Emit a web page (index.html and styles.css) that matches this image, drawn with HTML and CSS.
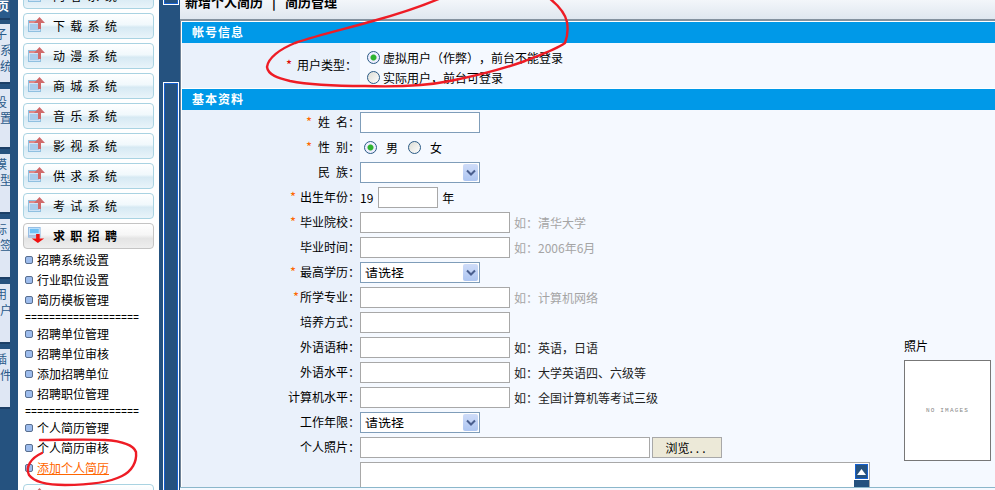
FILE: index.html
```html
<!DOCTYPE html>
<html lang="zh-CN">
<head>
  <meta charset="UTF-8">
  <title>新增个人简历</title>
  <link rel="stylesheet" href="styles.css">
</head>
<body>
  <svg class="icon-defs" width="0" height="0">
    <symbol id="icon-up" viewBox="0 0 18 16">
      <rect x="0.5" y="3.5" width="12" height="11" fill="#cfe3f5" stroke="#8fc0e0"/>
      <rect x="1" y="4" width="11" height="2" fill="#e08a8a"/>
      <rect x="2" y="7" width="9" height="6" fill="#a9cbea"/>
      <path d="M6 6 L11.5 0 L17 6 H13 V12 H10 V6 Z" fill="#d06a6a"/>
    </symbol>
    <symbol id="icon-down" viewBox="0 0 20 18">
      <rect x="0.5" y="0.5" width="13" height="11" fill="#cfe8fb" stroke="#8fb8e0"/>
      <rect x="2" y="2" width="10" height="5" fill="#6fc0f5"/>
      <rect x="1" y="9" width="12" height="2" fill="#b0b8d8"/>
      <path d="M9 8 H13 V13 H18 L11 18 L4 13 H9 Z" fill="#f01010"/>
    </symbol>
  </svg>

  <div class="app">
    <!-- far left tabs -->
    <div class="rail">
      <div class="rail-top">页</div>
      <div class="rail-tab">子<br>系<br>统</div>
      <div class="rail-tab rail-tab-low">设<br>置</div>
      <div class="rail-tab">模<br>型</div>
      <div class="rail-tab">标<br>签</div>
      <div class="rail-tab">用<br>户</div>
      <div class="rail-tab">插<br>件</div>
    </div>

    <!-- menu -->
    <div class="sidebar">
      <a class="menu-btn"><svg class="menu-icon"><use href="#icon-up"/></svg>内容系统</a>
      <a class="menu-btn"><svg class="menu-icon"><use href="#icon-up"/></svg>下载系统</a>
      <a class="menu-btn"><svg class="menu-icon"><use href="#icon-up"/></svg>动漫系统</a>
      <a class="menu-btn"><svg class="menu-icon"><use href="#icon-up"/></svg>商城系统</a>
      <a class="menu-btn"><svg class="menu-icon"><use href="#icon-up"/></svg>音乐系统</a>
      <a class="menu-btn"><svg class="menu-icon"><use href="#icon-up"/></svg>影视系统</a>
      <a class="menu-btn"><svg class="menu-icon"><use href="#icon-up"/></svg>供求系统</a>
      <a class="menu-btn"><svg class="menu-icon"><use href="#icon-up"/></svg>考试系统</a>
      <a class="menu-btn active"><svg class="menu-icon"><use href="#icon-down"/></svg>求职招聘</a>
      <ul class="submenu">
        <li>招聘系统设置</li>
        <li>行业职位设置</li>
        <li>简历模板管理</li>
        <li class="sep">===================</li>
        <li>招聘单位管理</li>
        <li>招聘单位审核</li>
        <li>添加招聘单位</li>
        <li>招聘职位管理</li>
        <li class="sep">===================</li>
        <li>个人简历管理</li>
        <li>个人简历审核</li>
        <li><a class="current" href="#">添加个人简历</a></li>
      </ul>
      <a class="menu-btn"><svg class="menu-icon"><use href="#icon-up"/></svg>系统管理</a>
    </div>

    <!-- scroll strip -->
    <div class="splitter">
      <div class="thumb thumb-top"></div>
      <div class="thumb thumb-main"></div>
    </div>

    <div class="main">
      <div class="page-title"><h1>新增个人简历<span class="title-sep">|</span>简历管理</h1></div>

      <div class="content">
        <div class="section-head">帐号信息</div>
        <div class="row row-account">
          <div class="label"><span class="star star-red">*</span>用户类型：</div>
          <div class="value value-stack">
            <label class="radio-line"><input type="radio" name="usertype" checked>虚拟用户（作弊），前台不能登录</label>
            <label class="radio-line"><input type="radio" name="usertype">实际用户，前台可登录</label>
          </div>
        </div>

        <div class="section-head section-gap">基本资料</div>
        <div class="basic">
          <div class="rows">
            <div class="row">
              <div class="label"><span class="star star-wide">*</span>姓&ensp;名：</div>
              <div class="value"><input class="input input-blue" type="text"></div>
            </div>
            <div class="row">
              <div class="label"><span class="star star-wide">*</span>性&ensp;别：</div>
              <div class="value gender">
                <input type="radio" name="sex" checked><span>男</span>
                <input type="radio" name="sex"><span>女</span>
              </div>
            </div>
            <div class="row">
              <div class="label">民&ensp;族：</div>
              <div class="value"><div class="select"><select></select><span class="select-btn"><svg width="10" height="8" viewBox="0 0 10 8"><path d="M1 1.5 L5 5.5 L9 1.5" fill="none" stroke="#4a5f8f" stroke-width="2"/></svg></span></div></div>
            </div>
            <div class="row">
              <div class="label"><span class="star">*</span>出生年份：</div>
              <div class="value">19<input class="input input-year" type="text">年</div>
            </div>
            <div class="row">
              <div class="label"><span class="star">*</span>毕业院校：</div>
              <div class="value"><input class="input" type="text"><span class="hint">如：清华大学</span></div>
            </div>
            <div class="row">
              <div class="label">毕业时间：</div>
              <div class="value"><input class="input" type="text"><span class="hint">如：2006年6月</span></div>
            </div>
            <div class="row">
              <div class="label"><span class="star">*</span>最高学历：</div>
              <div class="value"><div class="select"><select><option>请选择</option></select><span class="select-btn"><svg width="10" height="8" viewBox="0 0 10 8"><path d="M1 1.5 L5 5.5 L9 1.5" fill="none" stroke="#4a5f8f" stroke-width="2"/></svg></span></div></div>
            </div>
            <div class="row">
              <div class="label"><span class="star star-tight">*</span>所学专业：</div>
              <div class="value"><input class="input" type="text"><span class="hint">如：计算机网络</span></div>
            </div>
            <div class="row">
              <div class="label">培养方式：</div>
              <div class="value"><input class="input" type="text"></div>
            </div>
            <div class="row">
              <div class="label">外语语种：</div>
              <div class="value"><input class="input" type="text"><span class="hint hint-dark">如：英语，日语</span></div>
            </div>
            <div class="row">
              <div class="label">外语水平：</div>
              <div class="value"><input class="input" type="text"><span class="hint hint-dark">如：大学英语四、六级等</span></div>
            </div>
            <div class="row">
              <div class="label">计算机水平：</div>
              <div class="value"><input class="input" type="text"><span class="hint hint-dark">如：全国计算机等考试三级</span></div>
            </div>
            <div class="row">
              <div class="label">工作年限：</div>
              <div class="value"><div class="select"><select><option>请选择</option></select><span class="select-btn"><svg width="10" height="8" viewBox="0 0 10 8"><path d="M1 1.5 L5 5.5 L9 1.5" fill="none" stroke="#4a5f8f" stroke-width="2"/></svg></span></div></div>
            </div>
            <div class="row">
              <div class="label">个人照片：</div>
              <div class="value"><input class="input input-file" type="text"><button class="browse" type="button">浏览<span class="dots">...</span></button></div>
            </div>
            <div class="row row-text">
              <div class="label"></div>
              <div class="value">
                <div class="textbox">
                  <div class="textbox-bar">
                    <div class="textbox-up"><svg width="9" height="6" viewBox="0 0 9 6"><path d="M0 6 L4.5 0 L9 6 Z" fill="#fff"/></svg></div>
                  </div>
                </div>
              </div>
            </div>
          </div>

          <div class="photo">
            <div class="photo-title">照片</div>
            <div class="photo-box">NO IMAGES</div>
          </div>
        </div>
      </div>

      <div class="bottom"></div>
    </div>
  </div>

  <!-- red marker strokes drawn over the screenshot -->
  <svg class="marks" viewBox="0 0 995 490">
    <path d="M441 -2 C420 7 395 15 373 21 C345 29 318 35 295 43 C280 49 268 58 267 67 C268 75 278 78 290 81 C310 85 335 86 365 86 C395 87 425 86 450 81 C475 76 500 70 525 61 C540 55 555 50 565 43 C568 35 568 28 567 22 C565 13 558 5 549 -2"/>
    <path d="M40 440 C60 440 85 439 105 440 C120 441 133 444 136 452 C137 462 132 471 122 476 C108 483 85 485 65 485 C50 485 35 483 29 475 C25 467 31 458 42 453"/>
  </svg>
</body>
</html>
```

FILE: styles.css
```css
* {
  box-sizing: border-box;
}

body {
  margin: 0;
  height: 100vh;
  overflow: hidden;
  font-family: "Noto Sans CJK SC", "Liberation Sans", sans-serif;
  font-size: 12px;
  color: #000;
  background: #fff;
  text-spacing-trim: space-all;
}

.icon-defs {
  position: absolute;
}

.app {
  display: flex;
  height: 100%;
}

/* far left tabs */
.rail {
  flex: none;
  width: 18px;
  background: #25527f;
  overflow: hidden;
}

.rail-top {
  width: 10px;
  height: 20px;
  margin-bottom: 4px;
  background: #2a5b8c;
  border-bottom: 2px solid #1c3f66;
  color: #fff;
  font-weight: bold;
  line-height: 12px;
  text-indent: -3px;
  overflow: hidden;
}

.rail-tab {
  width: 10px;
  height: 60px;
  margin-bottom: 5px;
  padding-top: 2px;
  background: #dfe7f4;
  border-bottom: 2px solid #1c3f66;
  color: #2a5a8a;
  line-height: 16px;
  text-indent: -5px;
  overflow: hidden;
}

.rail-tab-low {
  padding-top: 5px;
}

/* menu */
.sidebar {
  flex: none;
  width: 141px;
  padding: 0 5px;
  overflow: hidden;
}

.menu-btn {
  display: flex;
  align-items: center;
  height: 26px;
  margin-bottom: 4px;
  padding: 0 0 2px 4px;
  border: 1px solid #a9d3e2;
  border-radius: 4px;
  background: linear-gradient(#fff, #f0f8fc 45%, #d6e9f3 55%, #e9f4fa);
  letter-spacing: 5.3px;
}

.sidebar > .menu-btn:first-child {
  margin-top: -17px;
}

.menu-btn.active {
  border-color: #c4c4c4;
  background: linear-gradient(#fff, #f6f6f6 45%, #e4e4e4 60%, #eee);
  font-weight: bold;
}

.menu-icon {
  flex: none;
  width: 18px;
  height: 16px;
  margin-right: 7px;
}

.submenu {
  margin: -3px 0 6px;
  padding: 0 0 0 2px;
  list-style: none;
}

.submenu li {
  position: relative;
  height: 20px;
  padding-left: 12px;
  line-height: 20px;
  white-space: nowrap;
}

.submenu li::before {
  content: "";
  position: absolute;
  left: 0;
  top: 6px;
  width: 6px;
  height: 6px;
  border: 1px solid #5a6f8f;
  border-radius: 2px;
  background: #9dbcec;
}

.submenu li.sep {
  height: 14px;
  padding-left: 0;
  font-family: "Liberation Mono", monospace;
  font-size: 10px;
  line-height: 18px;
}

.submenu li.sep::before {
  display: none;
}

.current {
  color: #f60;
}

/* scroll strip */
.splitter {
  flex: none;
  width: 21px;
  padding-left: 4px;
  background: #25527f;
  overflow: hidden;
}

.thumb {
  width: 16px;
  border: 1px solid #fff;
  box-shadow: inset 0 0 0 1px #1560d0;
  background: #25527f;
}

.thumb-top {
  height: 30px;
  margin-top: -25px;
}

.thumb-main {
  height: 500px;
  margin-top: 77px;
}

/* main */
.main {
  flex: 1;
  min-width: 0;
  display: flex;
  flex-direction: column;
}

.page-title {
  flex: none;
  height: 21px;
  padding-left: 5px;
  background: linear-gradient(#f3f6fa, #dfe7ef);
  border-bottom: 2px solid #84929f;
  overflow: hidden;
}

.page-title h1 {
  margin: -7px 0 0;
  font-size: 13px;
  line-height: 18px;
}

.title-sep {
  margin: 0 9px;
}

.content {
  flex: 1;
  min-height: 0;
  padding: 1px 0 0 1px;
  border-left: 1px solid #6f8296;
  overflow: hidden;
}

.section-head {
  height: 21px;
  padding-left: 10px;
  background: #0099e8;
  color: #fff;
  font-weight: bold;
  line-height: 20px;
  letter-spacing: 1px;
}

.section-gap {
  margin-top: 1px;
}

.row {
  display: grid;
  grid-template-columns: 178px 1fr;
  height: 25px;
}

.label {
  display: flex;
  align-items: center;
  justify-content: flex-end;
  padding-bottom: 2px;
  background: #eaf1fb;
  white-space: nowrap;
}

.value {
  display: flex;
  align-items: center;
  background: #f5f9ff;
  white-space: nowrap;
}

.row-account {
  height: 45px;
}

.row-account .label {
  padding-right: 3px;
}

.value-stack {
  flex-direction: column;
  align-items: flex-start;
  justify-content: center;
  padding: 3px 0 0 7px;
}

.radio-line {
  display: flex;
  align-items: center;
  height: 20px;
}

.radio-line input[type="radio"] {
  margin-right: 3px;
}

.star {
  margin-right: 4px;
  color: #f60;
  font-size: 13px;
}

.star-red {
  margin-right: 5px;
  color: #d00;
}

.star-wide {
  margin-right: 6px;
}

.star-tight {
  margin-right: 1px;
}

input[type="radio"] {
  flex: none;
  width: 13px;
  height: 13px;
  margin: 0;
  border: 1px solid #2a5a85;
  border-radius: 50%;
  background: linear-gradient(135deg, #dcdcd4, #fff);
  appearance: none;
}

input[type="radio"]:checked {
  background: radial-gradient(circle, #2fb32f 0 2.5px, #eef 3.5px);
}

.gender {
  padding-left: 4px;
}

.gender span {
  margin: 0 10px 0 9px;
}

.input {
  width: 150px;
  height: 21px;
  padding: 0;
  border: 1px solid #a8a8a8;
  background: #fff;
}

.input-blue {
  width: 120px;
  border-color: #7f9db9;
}

.input-year {
  width: 60px;
  margin: 0 4px 0 5px;
}

.input-file {
  width: 290px;
}

.hint {
  margin-left: 4px;
  color: #a5a5a5;
}

.hint-dark {
  color: #222;
}

.select {
  position: relative;
  width: 120px;
  height: 21px;
}

.select select {
  display: block;
  width: 100%;
  height: 100%;
  padding: 0 0 4px 4px;
  border: 1px solid #7f9db9;
  border-radius: 0;
  background: #fff;
  font: inherit;
  font-size: 13px;
  color: #000;
  appearance: none;
}

.select-btn {
  position: absolute;
  right: 2px;
  top: 2px;
  display: flex;
  align-items: center;
  justify-content: center;
  width: 15px;
  height: 17px;
  border-radius: 2px;
  background: linear-gradient(#cfdcf8, #aec6f2);
}

.browse {
  width: 70px;
  height: 21px;
  margin-left: 2px;
  padding: 0;
  border: 1px solid #a8a8a8;
  background: #ece9d8;
  font: inherit;
}

.dots {
  letter-spacing: 3px;
}

.row-text {
  height: 60px;
}

.row-text .value {
  align-items: flex-start;
  padding-top: 2px;
}

.textbox {
  display: flex;
  justify-content: flex-end;
  width: 510px;
  height: 50px;
  border: 1px solid #a8a8a8;
  background: #fff;
}

.textbox-bar {
  width: 15px;
  background: #25527f;
}

.textbox-up {
  display: flex;
  align-items: center;
  justify-content: center;
  height: 17px;
  border: 1px solid #fff;
  box-shadow: inset 0 0 0 1px #1560d0;
}

/* basic info + photo */
.basic {
  display: flex;
  background: #f5f9ff;
}

.rows {
  flex: 1;
  min-width: 0;
}

.photo {
  flex: none;
  width: 91px;
  margin-top: 228px;
}

.photo-title {
  height: 22px;
  line-height: 16px;
}

.photo-box {
  display: flex;
  align-items: center;
  justify-content: center;
  width: 87px;
  height: 101px;
  border: 1px solid #777;
  background: #fff;
  color: #888;
  font-family: "Liberation Mono", monospace;
  font-size: 6px;
  letter-spacing: 1.2px;
}

.bottom {
  flex: none;
  height: 3px;
  border-top: 1px solid #8bb7cb;
  background: #f5f9ff;
}

/* red marker */
.marks {
  position: absolute;
  left: 0;
  top: 0;
  width: 995px;
  height: 490px;
  pointer-events: none;
}

.marks path {
  fill: none;
  stroke: #ee1c25;
  stroke-width: 2.4;
  stroke-linecap: round;
  stroke-linejoin: round;
}
```
